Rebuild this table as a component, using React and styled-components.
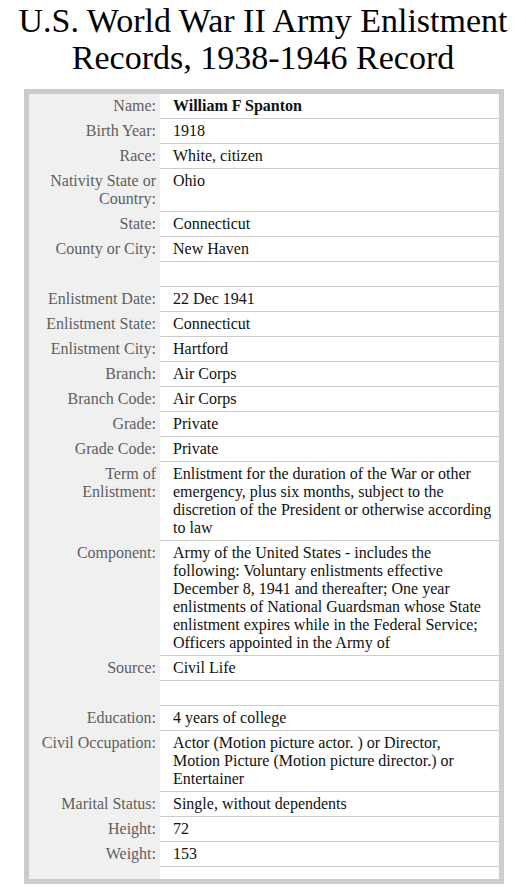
import React from 'react';
import styled, { createGlobalStyle } from 'styled-components';

const GlobalStyle = createGlobalStyle`
  body {
    margin: 0;
    background: #fff;
    font-family: "Liberation Serif", "DejaVu Serif", serif;
  }
`;

const record = [
  { label: 'Name:', value: 'William F Spanton', strong: true },
  { label: 'Birth Year:', value: '1918' },
  { label: 'Race:', value: 'White, citizen' },
  { label: 'Nativity State or\nCountry:', value: 'Ohio' },
  { label: 'State:', value: 'Connecticut' },
  { label: 'County or City:', value: 'New Haven' },
  { label: '', value: '' },
  { label: 'Enlistment Date:', value: '22 Dec 1941' },
  { label: 'Enlistment State:', value: 'Connecticut' },
  { label: 'Enlistment City:', value: 'Hartford' },
  { label: 'Branch:', value: 'Air Corps' },
  { label: 'Branch Code:', value: 'Air Corps' },
  { label: 'Grade:', value: 'Private' },
  { label: 'Grade Code:', value: 'Private' },
  {
    label: 'Term of\nEnlistment:',
    value: 'Enlistment for the duration of the War or other\nemergency, plus six months, subject to the\ndiscretion of the President or otherwise according\nto law',
  },
  {
    label: 'Component:',
    value: 'Army of the United States - includes the\nfollowing: Voluntary enlistments effective\nDecember 8, 1941 and thereafter; One year\nenlistments of National Guardsman whose State\nenlistment expires while in the Federal Service;\nOfficers appointed in the Army of',
  },
  { label: 'Source:', value: 'Civil Life' },
  { label: '', value: '' },
  { label: 'Education:', value: '4 years of college' },
  {
    label: 'Civil Occupation:',
    value: 'Actor (Motion picture actor. ) or Director,\nMotion Picture (Motion picture director.) or\nEntertainer',
  },
  { label: 'Marital Status:', value: 'Single, without dependents' },
  { label: 'Height:', value: '72' },
  { label: 'Weight:', value: '153' },
];

function App() {
  return (
    <Page>
      <GlobalStyle />
      <Title>U.S. World War II Army Enlistment<br />Records, 1938-1946 Record</Title>
      <Frame>
        {record.map((row, i) => (
          <Row key={i}>
            <Label>{row.label}</Label>
            <Value $strong={row.strong}>{row.value || '\u00a0'}</Value>
          </Row>
        ))}
      </Frame>
    </Page>
  );
}

const Page = styled.div`
  width: 526px;
  padding-top: 2px;
`;

const Title = styled.h1`
  margin: 0;
  font-weight: normal;
  font-size: 34px;
  line-height: 37px;
  text-align: center;
  color: #000;
`;

const Frame = styled.div`
  box-sizing: border-box;
  width: 480px;
  margin: 13px 0 0 24px;
  border: 5px solid #ccc;
  padding-bottom: 12px;
  background: linear-gradient(to right, #f0f0f0 131px, #fff 131px);
`;

const Row = styled.div`
  display: grid;
  grid-template-columns: 131px 1fr;
  font-size: 16px;
  line-height: 18px;
`;

const Label = styled.div`
  padding: 3px 4px 4px 0;
  text-align: right;
  color: #5e5e5e;
  white-space: pre;
`;

const Value = styled.div`
  padding: 3px 0 3px 13px;
  border-bottom: 1px solid #ccc;
  background: #fff;
  color: #111;
  white-space: pre;
  font-weight: ${p => (p.$strong ? 'bold' : 'normal')};
`;

export default App;
